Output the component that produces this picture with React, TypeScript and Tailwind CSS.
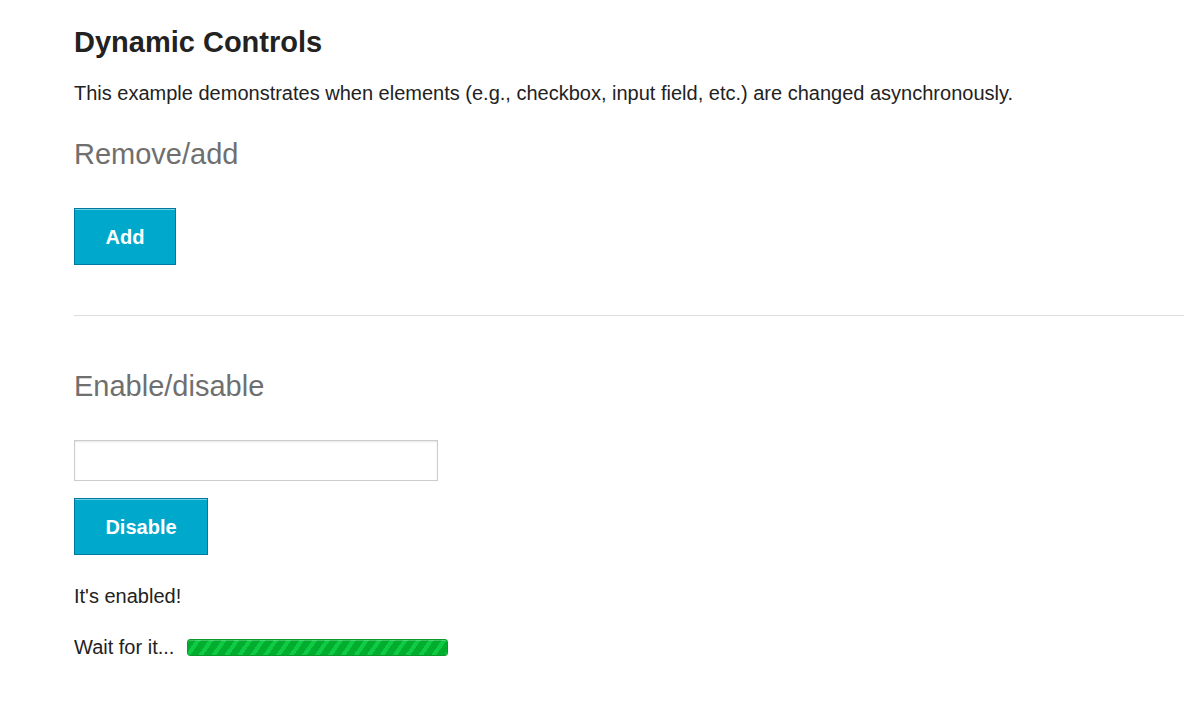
import React, { useState } from 'react';

const btn =
  'border border-[#0079a1] bg-[#00a9cc] text-white font-bold text-[20px] shadow-[inset_0_1px_0_rgba(255,255,255,0.45)] h-[57px]';

export default function App() {
  const [added, setAdded] = useState(false);
  const [enabled, setEnabled] = useState(true);

  return (
    <div className="min-h-[706px] bg-white font-['Liberation_Sans',Arial,sans-serif] text-[#222222]">
      <div className="pl-[74px] pt-[26px]">
        <h3 className="text-[29px] font-bold leading-[32px]">Dynamic Controls</h3>
        <p className="mt-[23px] text-[20px] leading-[24px]">
          This example demonstrates when elements (e.g., checkbox, input field, etc.) are changed asynchronously.
        </p>

        <h4 className="mt-[31px] text-[29px] leading-[36px] text-[#6f6f6f]">Remove/add</h4>
        <div className="mt-[36px]">
          <button className={btn + ' w-[102px]'} onClick={() => setAdded(!added)}>
            Add
          </button>
        </div>
      </div>

      <hr className="ml-[74px] mt-[50px] border-0 border-t border-[#dddddd]" />

      <div className="pl-[74px]">
        <h4 className="mt-[52px] text-[29px] leading-[36px] text-[#6f6f6f]">Enable/disable</h4>
        <div className="mt-[36px]">
          <input
            type="text"
            disabled={!enabled}
            className="block h-[41px] w-[364px] border border-[#cccccc] bg-white px-2 shadow-[inset_0_1px_2px_rgba(0,0,0,0.1)] outline-none"
          />
        </div>
        <div className="mt-[17px]">
          <button className={btn + ' w-[134px]'} onClick={() => setEnabled(!enabled)}>
            Disable
          </button>
        </div>
        <p className="mt-[29px] text-[20px] leading-[24px]">It's enabled!</p>
        <div className="mt-[27px] flex items-center">
          <span className="text-[20px] leading-[24px]">Wait for it...</span>
          <div className="ml-[13px] h-[17px] w-[261px] rounded-[3px] border border-[#0b9a2a] bg-[repeating-linear-gradient(125deg,#00ad2f_0px,#00ad2f_6.5px,#0fca43_6.5px,#0fca43_10.6px)] shadow-[inset_0_1px_0_rgba(255,255,255,0.25)]" />
        </div>
      </div>
    </div>
  );
}
